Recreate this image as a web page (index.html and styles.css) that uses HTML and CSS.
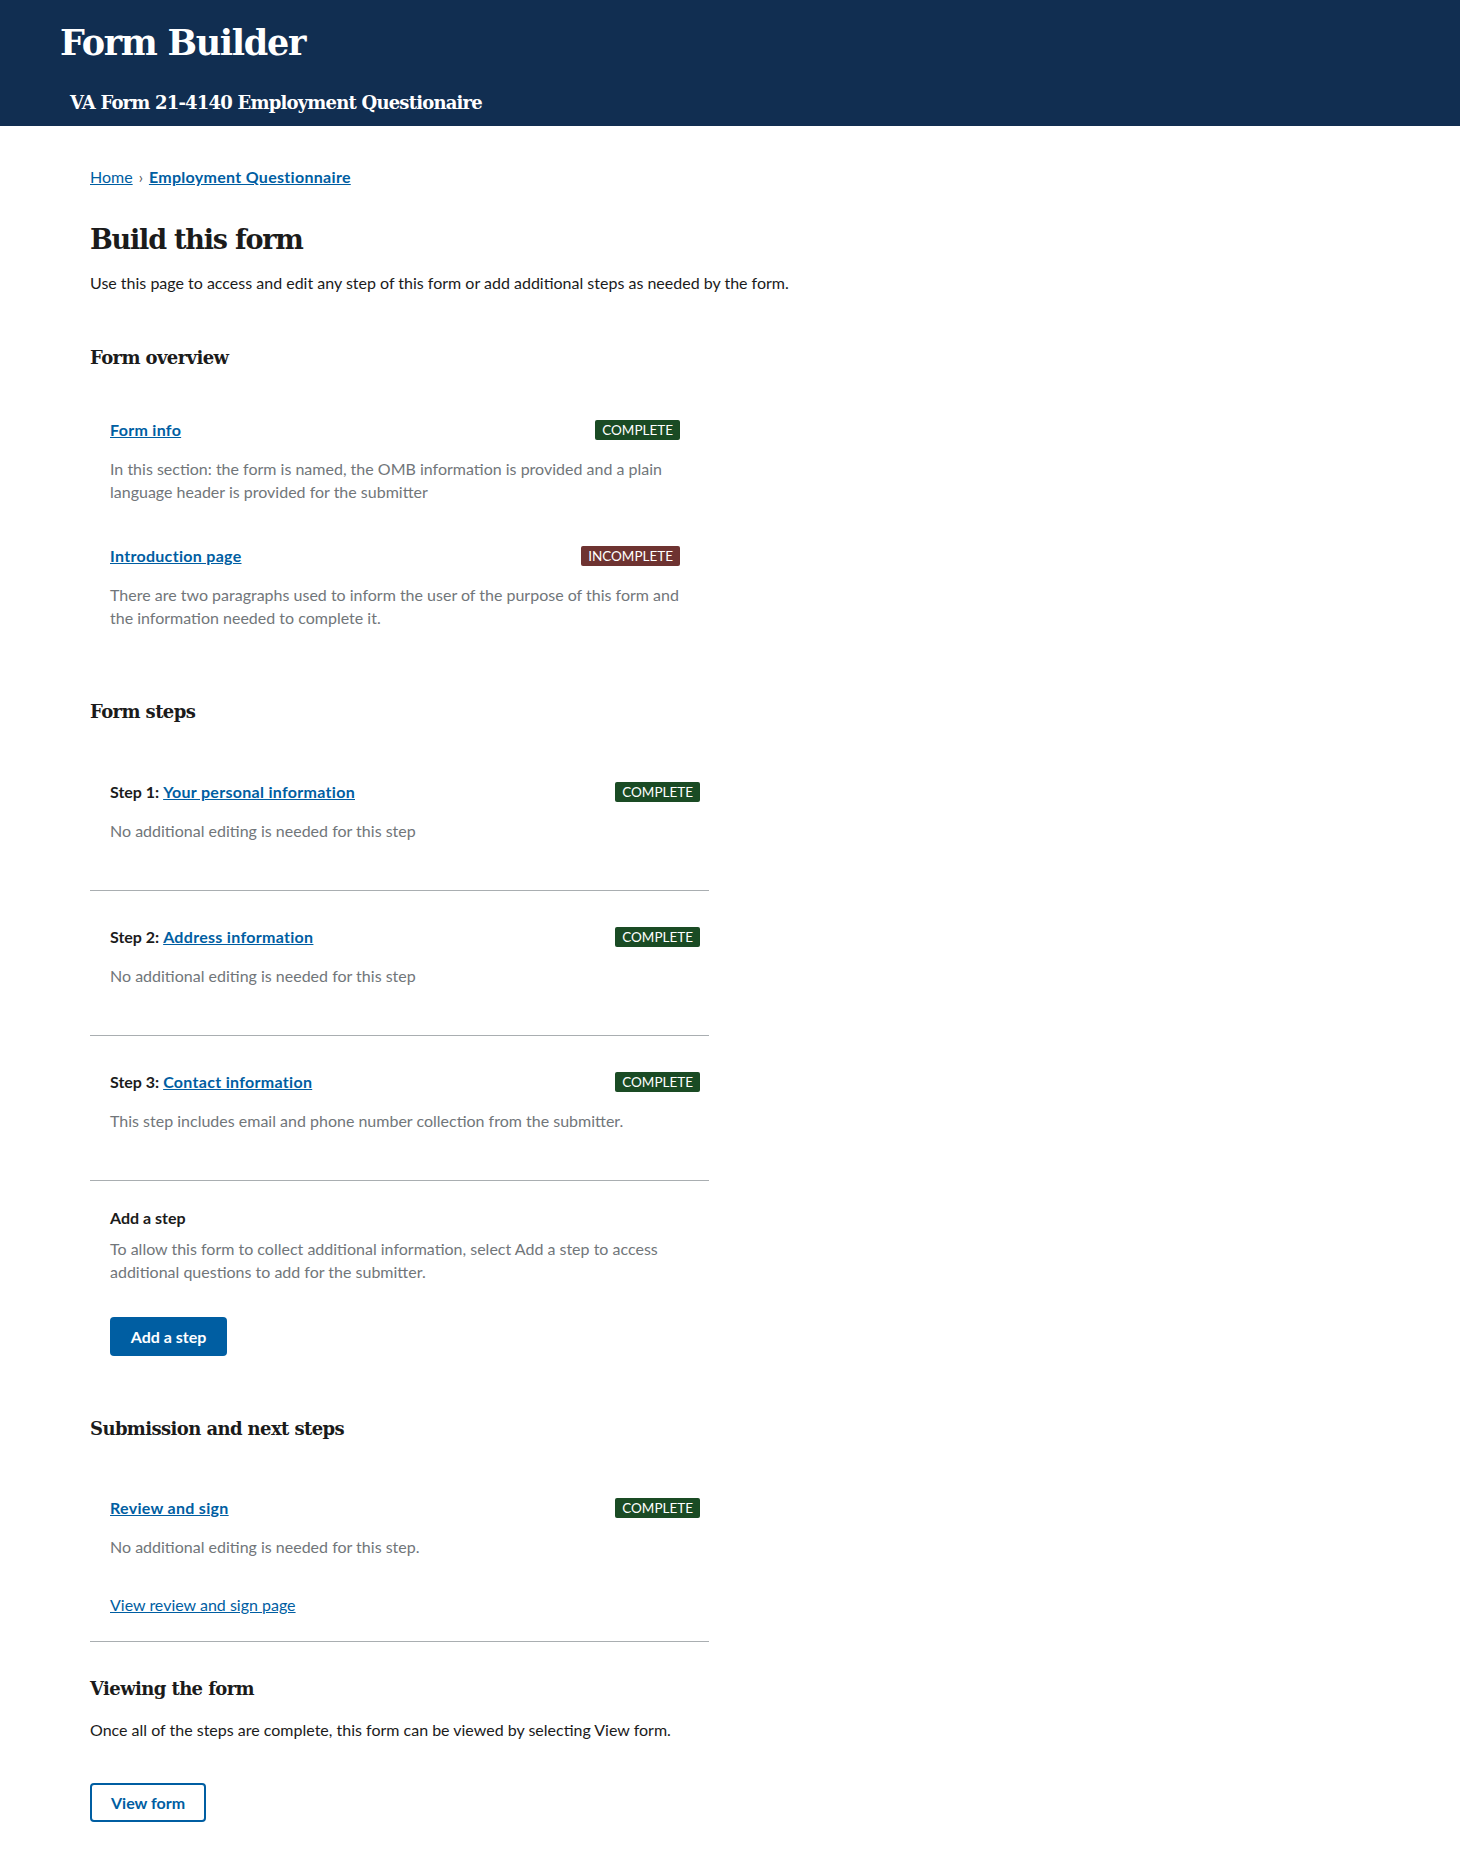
FILE: index.html
```html
<!DOCTYPE html>
<html lang="en">
<head>
<meta charset="utf-8">
<title>Form Builder</title>
<link rel="stylesheet" href="styles.css">
</head>
<body>
<header class="site-header">
  <h1 class="site-title">Form Builder</h1>
  <p class="site-subtitle">VA Form 21-4140 Employment Questionaire</p>
</header>
<main class="main">
  <nav class="breadcrumb">
    <a href="#" class="crumb">Home</a>
    <span class="crumb-sep">›</span>
    <a href="#" class="crumb crumb-current">Employment Questionnaire</a>
  </nav>

  <h1 class="page-title">Build this form</h1>
  <p class="lead">Use this page to access and edit any step of this form or add additional steps as needed by the form.</p>

  <section class="section">
    <h2 class="section-title">Form overview</h2>
    <div class="overview">
      <div class="item">
        <div class="item-row">
          <a href="#" class="item-link">Form info</a>
          <span class="badge badge-complete">Complete</span>
        </div>
        <p class="item-desc">In this section: the form is named, the OMB information is provided and a plain language header is provided for the submitter</p>
      </div>
      <div class="item item-next">
        <div class="item-row">
          <a href="#" class="item-link">Introduction page</a>
          <span class="badge badge-incomplete">Incomplete</span>
        </div>
        <p class="item-desc">There are two paragraphs used to inform the user of the purpose of this form and the information needed to complete it.</p>
      </div>
    </div>
  </section>

  <section class="section section-steps">
    <h2 class="section-title">Form steps</h2>
    <div class="steps">
      <div class="step step-first">
        <div class="step-row">
          <span class="step-label">Step 1: <a href="#" class="item-link">Your personal information</a></span>
          <span class="badge badge-complete">Complete</span>
        </div>
        <p class="item-desc">No additional editing is needed for this step</p>
      </div>
      <div class="step">
        <div class="step-row">
          <span class="step-label">Step 2: <a href="#" class="item-link">Address information</a></span>
          <span class="badge badge-complete">Complete</span>
        </div>
        <p class="item-desc">No additional editing is needed for this step</p>
      </div>
      <div class="step">
        <div class="step-row">
          <span class="step-label">Step 3: <a href="#" class="item-link">Contact information</a></span>
          <span class="badge badge-complete">Complete</span>
        </div>
        <p class="item-desc">This step includes email and phone number collection from the submitter.</p>
      </div>
      <div class="add-step">
        <h3 class="add-title">Add a step</h3>
        <p class="add-desc">To allow this form to collect additional information, select Add a step to access additional questions to add for the submitter.</p>
        <button class="btn btn-primary" type="button">Add a step</button>
      </div>
    </div>
  </section>

  <section class="section section-submit">
    <h2 class="section-title">Submission and next steps</h2>
    <div class="submit">
      <div class="step-row">
        <a href="#" class="item-link">Review and sign</a>
        <span class="badge badge-complete">Complete</span>
      </div>
      <p class="item-desc">No additional editing is needed for this step.</p>
      <a href="#" class="plain-link">View review and sign page</a>
    </div>
  </section>

  <section class="section section-view">
    <h2 class="section-title">Viewing the form</h2>
    <p class="view-desc">Once all of the steps are complete, this form can be viewed by selecting View form.</p>
    <button class="btn btn-outline" type="button">View form</button>
  </section>
</main>
</body>
</html>
```

FILE: styles.css
```css
* { box-sizing: border-box; }

body {
  margin: 0;
  font-family: "Source Sans Pro", Lato, "Liberation Sans", sans-serif;
  font-size: 16px;
  line-height: 22px;
  color: #1b1b1b;
  background: #fff;
}

a { color: #005ea2; }

/* Header */
.site-header {
  background: #112e51;
  color: #fff;
  height: 126px;
  padding: 19px 0 0 60px;
}
.site-title {
  margin: 0;
  font-family: "DejaVu Serif", "Liberation Serif", serif;
  font-weight: 700;
  font-size: 35px;
  line-height: 48px;
  letter-spacing: -1.3px;
}
.site-subtitle {
  margin: 22px 0 0 10px;
  font-family: "DejaVu Serif", "Liberation Serif", serif;
  font-weight: 700;
  font-size: 18px;
  line-height: 28px;
  letter-spacing: -0.8px;
}

/* Main */
.main {
  padding: 40px 0 30px 90px;
}

.breadcrumb {
  display: flex;
  align-items: center;
  gap: 6px;
  line-height: 22px;
}
.crumb-sep { color: #555; font-size: 15px; }
.crumb-current { font-weight: 700; letter-spacing: 0.3px; }

.page-title {
  margin: 32px 0 0;
  font-family: "DejaVu Serif", "Liberation Serif", serif;
  font-weight: 700;
  font-size: 27px;
  line-height: 40px;
  letter-spacing: -1.2px;
}
.lead { margin: 12px 0 0; }

.section-title {
  margin: 0;
  font-family: "DejaVu Serif", "Liberation Serif", serif;
  font-weight: 700;
  font-size: 18px;
  line-height: 28px;
  letter-spacing: -0.6px;
}

.section { margin-top: 50px; }

/* Overview */
.overview {
  margin-top: 47px;
  width: 610px;
  padding: 0 20px;
}
.item-next { margin-top: 42px; }
.item-row,
.step-row {
  display: flex;
  align-items: center;
  justify-content: space-between;
  height: 22px;
}
.item-link { font-weight: 700; letter-spacing: 0.3px; }
.item-desc {
  margin: 16px 0 0;
  color: #71767a;
  line-height: 23px;
}

.badge {
  display: inline-block;
  height: 20px;
  line-height: 20px;
  padding: 0 7px;
  border-radius: 2px;
  color: #fff;
  font-size: 13.5px;
  text-transform: uppercase;
  letter-spacing: 0;
}
.badge-complete { background: #1a4b24; }
.badge-incomplete { background: #6e3331; }

/* Steps */
.section-steps { margin-top: 69px; }
.steps {
  margin-top: 55px;
  width: 619px;
}
.step {
  padding: 35px 9px 48px 20px;
  border-bottom: 1px solid #a9aeb1;
}
.step-first { padding-top: 0; }
.step-label { font-weight: 700; }

.add-step { padding: 26px 9px 0 20px; }
.add-title {
  margin: 0;
  font-size: 16px;
  line-height: 22px;
  font-weight: 700;
}
.add-desc {
  margin: 8px 0 0;
  color: #71767a;
  line-height: 23px;
}

.btn {
  display: inline-block;
  height: 39px;
  border-radius: 4px;
  font-family: inherit;
  font-size: 16px;
  font-weight: 700;
  cursor: pointer;
}
.btn-primary {
  margin-top: 34px;
  width: 117px;
  background: #005ea2;
  border: none;
  color: #fff;
}
.btn-outline {
  margin-top: 42px;
  width: 116px;
  background: #fff;
  border: 2px solid #005ea2;
  color: #005ea2;
}

/* Submission */
.section-submit { margin-top: 59px; }
.submit {
  margin-top: 54px;
  width: 619px;
  padding: 0 9px 25px 20px;
  border-bottom: 1px solid #a9aeb1;
}
.plain-link {
  display: inline-block;
  margin-top: 36px;
}

/* View */
.section-view { margin-top: 33px; }
.view-desc { margin: 16px 0 0; }
```
